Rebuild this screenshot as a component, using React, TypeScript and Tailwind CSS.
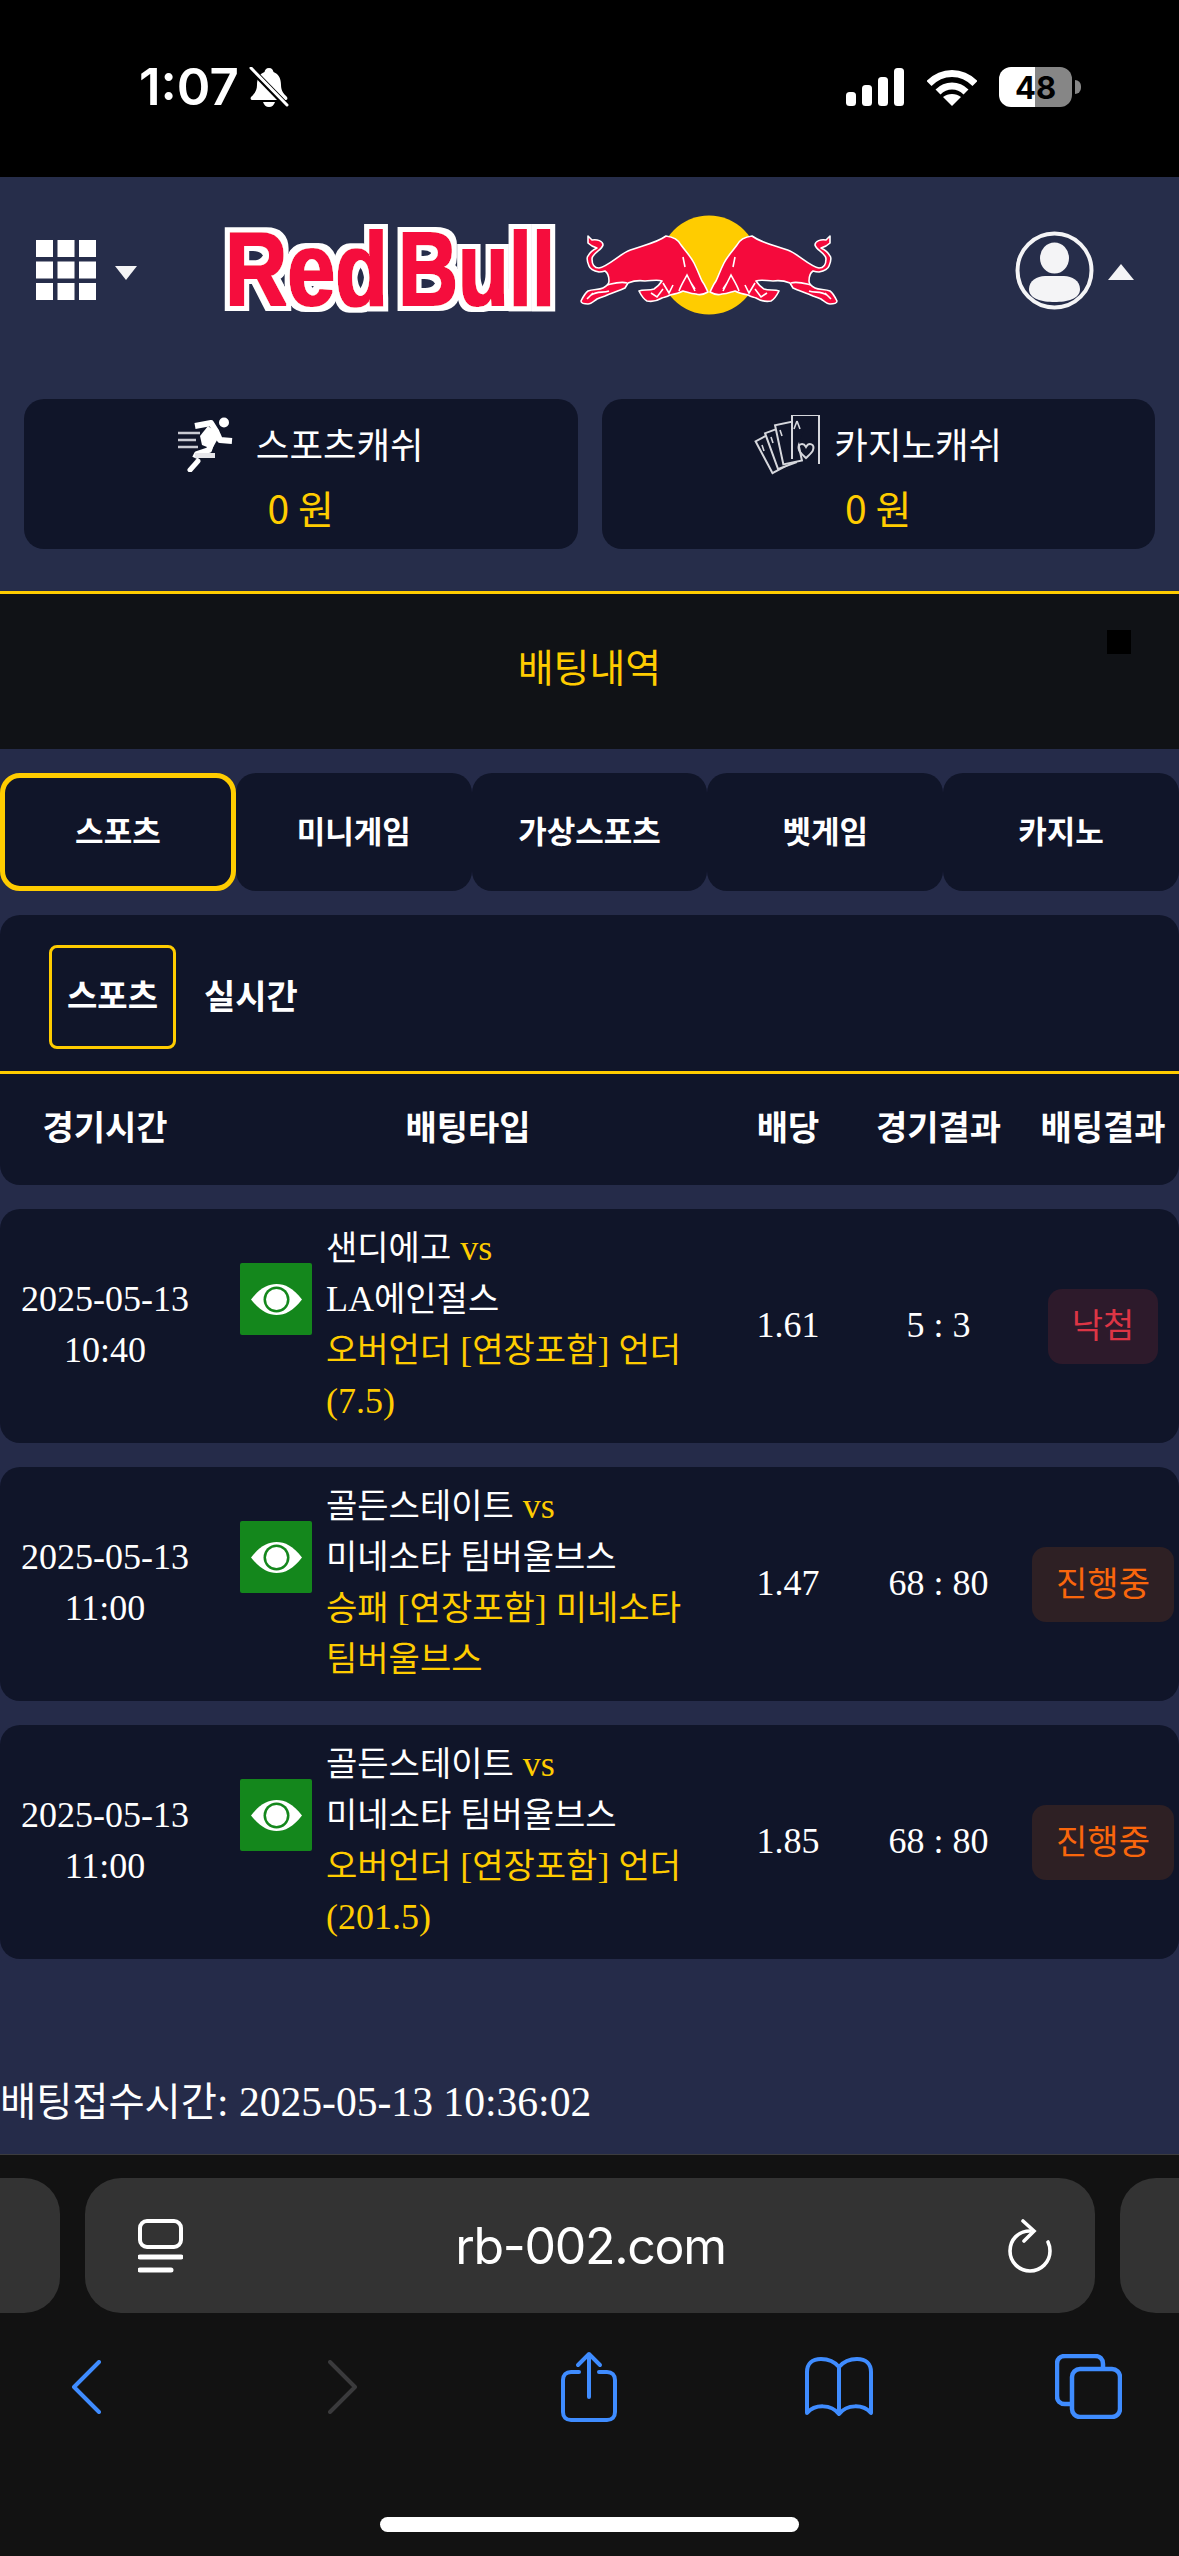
const sans = "font-['Noto_Sans_CJK_KR','Noto_Sans',sans-serif]";

const bets = [
  {
    date: "2025-05-13",
    time: "10:40",
    home: "샌디에고",
    away: "LA에인절스",
    pick: "오버언더 [연장포함] 언더 (7.5)",
    odds: "1.61",
    score: "5 : 3",
    result: "낙첨",
  },
  {
    date: "2025-05-13",
    time: "11:00",
    home: "골든스테이트",
    away: "미네소타 팀버울브스",
    pick: "승패 [연장포함] 미네소타 팀버울브스",
    odds: "1.47",
    score: "68 : 80",
    result: "진행중",
  },
  {
    date: "2025-05-13",
    time: "11:00",
    home: "골든스테이트",
    away: "미네소타 팀버울브스",
    pick: "오버언더 [연장포함] 언더 (201.5)",
    odds: "1.85",
    score: "68 : 80",
    result: "진행중",
  },
];

// hangul runs sit a bit smaller than the serif latin next to them
function Mixed({ text }: { text: string }) {
  const parts = text.split(/([\uac00-\ud7a3]+)/);
  return (
    <>
      {parts.map((part, i) =>
        i % 2 === 1 ? (
          <span key={i} className="text-[0.945em]">
            {part}
          </span>
        ) : (
          part
        )
      )}
    </>
  );
}

function Bull() {
  return (
    <g>
      <path
        d="M9 21 L13 25 C18 24 24 26 24 30 C23 35 13 38 13 44 C13 50 16 53 20 53 C28 52 40 40 49 36 C60 31 76 29 87 21 C95 22 100 26 102 30 C108 38 112 42 115 48 C119 56 121 62 123 66 C126 70 127 73 129 77 C124 80 120 80 117 79 C112 79 108 77 104 76 C100 78 96 79 91 80 C88 82 86 82 83 83 C78 86 73 87 68 86 C64 84 62 80 60 76 C64 74 70 76 75 74 C78 72 81 69 83 66 C78 64 72 66 66 66 C60 65 54 66 49 68 L46 73 C40 76 32 78 26 81 C23 82 20 83 18 84 C15 86 12 89 9 89 C5 89 2 88 2 86 C4 82 6 78 9 76 C14 74 20 75 24 73 C28 71 30 69 30 66 C30 62 29 58 26 56 C23 57 21 57 20 57 C15 56 11 54 10 51 C8 46 8 42 9 41 C11 37 14 35 18 33 C14 32 11 30 9 28 Z"
        fill="#f50a3c"
        stroke="#ffffff"
        strokeWidth="1.6"
        strokeLinejoin="round"
      />
      <path
        d="M100 76 C102 70 106 64 108 60 C110 64 113 70 116 76 M84 68 L90 78 L94 70 M72 78 L78 82 L84 74 M28 70 C36 68 42 66 48 68 M12 80 C18 76 24 78 30 76 M8 84 L14 78 M104 42 L106 52 M112 68 L116 74"
        fill="none"
        stroke="#ffffff"
        strokeWidth="1.6"
      />
    </g>
  );
}

function RedBullLogo() {
  return (
    <svg width="615" height="100" viewBox="0 0 615 100" className="block overflow-visible">
      <defs>
        <filter id="logoOutline" x="-10%" y="-20%" width="120%" height="140%">
          <feMorphology in="SourceAlpha" operator="dilate" radius="6" result="outer" />
          <feFlood floodColor="#ffffff" />
          <feComposite in2="outer" operator="in" result="white" />
          <feMorphology in="SourceGraphic" operator="dilate" radius="1" result="fat" />
          <feMerge>
            <feMergeNode in="white" />
            <feMergeNode in="fat" />
          </feMerge>
        </filter>
      </defs>
      <g fontFamily="'Liberation Sans', sans-serif" fontWeight="700" fontSize="103" fill="#f50a3c" filter="url(#logoOutline)">
        <text x="1" y="90" textLength="163" lengthAdjust="spacingAndGlyphs">
          Red
        </text>
        <text x="174" y="90" textLength="157" lengthAdjust="spacingAndGlyphs">
          Bull
        </text>
      </g>
      <g transform="translate(355 0)">
        <circle cx="130" cy="50" r="49.5" fill="#ffcc00" />
        <Bull />
        <g transform="translate(260 0) scale(-1 1)">
          <Bull />
        </g>
      </g>
    </svg>
  );
}

function MenuGrid() {
  return (
    <svg width="60" height="60" viewBox="0 0 60 60" fill="#ffffff" className="mt-[10px] block">
      <rect x="0" y="0" width="17" height="17" />
      <rect x="21.5" y="0" width="17" height="17" />
      <rect x="43" y="0" width="17" height="17" />
      <rect x="0" y="21.5" width="17" height="17" />
      <rect x="21.5" y="21.5" width="17" height="17" />
      <rect x="43" y="21.5" width="17" height="17" />
      <rect x="0" y="43" width="17" height="17" />
      <rect x="21.5" y="43" width="17" height="17" />
      <rect x="43" y="43" width="17" height="17" />
    </svg>
  );
}

function ProfileIcon() {
  return (
    <svg width="79" height="79" viewBox="0 0 79 79" className="mt-[10px] block">
      <circle cx="39.5" cy="39.5" r="37" fill="none" stroke="#f4f4f6" strokeWidth="4" />
      <ellipse cx="39.5" cy="27" rx="14.5" ry="15.5" fill="#f4f4f6" />
      <path d="M14 58 C14 50 22 45 30 45 H49 C57 45 65 50 65 58 C65 68 52 71 39.5 71 C27 71 14 68 14 58 Z" fill="#f4f4f6" />
    </svg>
  );
}

function RunnerIcon() {
  return (
    <svg width="55" height="55" viewBox="0 0 55 55" className="block shrink-0">
      <circle cx="46" cy="5.5" r="5" fill="#ffffff" />
      <path
        d="M17 9 L33 6 L38 14 L33 27 L31 33 L19 37 L17 41 M38 14 L42 23 L54 24"
        fill="none"
        stroke="#ffffff"
        strokeWidth="6"
        strokeLinejoin="round"
      />
      <path d="M22 19 L30 9 L42 18 L34 32 L24 28 Z" fill="#ffffff" />
      <path d="M20 44 L12 53" stroke="#ffffff" strokeWidth="5" strokeLinecap="round" />
      <rect x="17" y="36" width="20" height="5" fill="#e6e6ea" />
      <path d="M0 16 H22 M0 23 H18 M0 30 H20" stroke="#c9cad2" strokeWidth="2.5" />
    </svg>
  );
}

function CardsIcon() {
  return (
    <svg width="66" height="60" viewBox="0 0 66 60" className="block shrink-0">
      <g fill="#101529" stroke="#d6d7dc" strokeWidth="2">
        <rect x="9" y="20" width="19" height="36" transform="rotate(-28 18 38)" />
        <rect x="17" y="14" width="19" height="38" transform="rotate(-20 26 33)" />
        <rect x="25" y="8" width="19" height="40" transform="rotate(-12 34 28)" />
        <path d="M56 0 H65 V49 M56 0 H38 L38 44" />
      </g>
      <path
        d="M52 32 C49 27 43 29 45 35 C46 38 50 41 52 43 C54 41 58 38 59 35 C61 29 55 27 52 32 Z"
        fill="none"
        stroke="#d6d7dc"
        strokeWidth="2"
      />
      <path d="M43 6 L40 14 M43 6 L46 14 M8 30 L10 36 M17 22 L19 28 M26 15 L28 21" stroke="#d6d7dc" strokeWidth="1.6" />
    </svg>
  );
}

function EyeIcon() {
  return (
    <svg width="51" height="31" viewBox="0 0 51 31" className="block">
      <path d="M0 15.5 C9 4 17 0 25.5 0 C34 0 42 4 51 15.5 C42 27 34 31 25.5 31 C17 31 9 27 0 15.5 Z" fill="#ffffff" />
      <circle cx="25.5" cy="15.5" r="13" fill="#14871c" />
      <circle cx="25.5" cy="15.5" r="10.5" fill="#ffffff" />
    </svg>
  );
}

function MutedBell() {
  return (
    <svg width="40" height="40" viewBox="0 0 40 40" className="block">
      <path d="M20 1 C23 1 24 3 24.5 5 C30 7 32 12 32 18 C32 24 35 27 38 30 C39 32 38 33 36 33 H4 C2 33 1 32 2 30 C5 27 8 24 8 18 C8 12 10 7 15.5 5 C16 3 17 1 20 1 Z" fill="#ffffff" />
      <path d="M14 35 H26 C25 38 23 40 20 40 C17 40 15 38 14 35 Z" fill="#ffffff" />
      <path d="M3 3 L38 39" stroke="#000000" strokeWidth="6" />
      <path d="M2 1 L38 38" stroke="#ffffff" strokeWidth="3" strokeLinecap="round" />
    </svg>
  );
}

function StatusIcons() {
  return (
    <div className="flex items-center">
      <svg width="58" height="38" viewBox="0 0 58 38" fill="#ffffff" className="block">
        <rect x="0" y="24" width="10" height="14" rx="3.5" />
        <rect x="16" y="17" width="10" height="21" rx="3.5" />
        <rect x="32" y="9" width="10" height="29" rx="3.5" />
        <rect x="48" y="0" width="10" height="38" rx="3.5" />
      </svg>
      <svg width="50" height="37" viewBox="0 0 50 37" className="ml-[23px] block">
        <path d="M2 14.5 C15 1 35 1 48 14.5" fill="none" stroke="#ffffff" strokeWidth="7" />
        <path d="M11 23 C19 15 31 15 39 23" fill="none" stroke="#ffffff" strokeWidth="7" />
        <path d="M25 37 L16 28 C21 24 29 24 34 28 Z" fill="#ffffff" />
      </svg>
      <div className="ml-[22px] flex h-[40px] w-[73px] items-center justify-center rounded-[12px] bg-[linear-gradient(90deg,#ffffff_49%,#868686_49%)] font-['Inter',sans-serif] text-[31px] font-bold leading-none text-black">
        48
      </div>
      <div className="ml-[3px] h-[14px] w-[6px] rounded-r-full bg-[#868686]" />
    </div>
  );
}

function BrowserBar() {
  return (
    <div className="flex h-[402px] shrink-0 flex-col border-t border-[#3c3c3e] bg-[#121212]">
      <div className="mt-[23px] flex h-[135px] items-stretch justify-between">
        <div className="w-[60px] rounded-r-[36px] bg-[#333333]" />
        <div className="flex w-[1010px] items-center rounded-[36px] bg-[#333333] pl-[53px] pr-[43px]">
          <svg width="45" height="54" viewBox="0 0 45 54" fill="none" stroke="#ffffff" strokeWidth="4" className="block shrink-0">
            <rect x="2" y="2" width="41" height="26" rx="7" />
            <path d="M2 38 H43 M2 51 H33" strokeLinecap="round" strokeWidth="5" />
          </svg>
          <span className="flex-1 pr-[10px] text-center font-['Inter',sans-serif] text-[50px] leading-none tracking-[-0.026em] text-white">rb-002.com</span>
          <svg width="44" height="54" viewBox="0 0 44 54" fill="none" stroke="#ffffff" strokeWidth="3.6" strokeLinecap="round" className="block shrink-0">
            <path d="M22 12 C10 12 2 21 2 32 C2 43 11 52 22 52 C33 52 42 43 42 32 C42 28 41 25 40 23" />
            <path d="M15 2 L26 12 L16 22" />
          </svg>
        </div>
        <div className="w-[59px] rounded-l-[36px] bg-[#333333]" />
      </div>
      <div className="mt-[38px] flex h-[71px] items-center pl-[71px]">
        <svg width="30" height="54" viewBox="0 0 30 54" fill="none" stroke="#3f8cff" strokeWidth="4" strokeLinecap="round" strokeLinejoin="round" className="block">
          <path d="M28 2 L3 27 L28 52" />
        </svg>
        <svg width="30" height="54" viewBox="0 0 30 54" fill="none" stroke="#3a3a3c" strokeWidth="4" strokeLinecap="round" strokeLinejoin="round" className="ml-[227px] block">
          <path d="M2 2 L27 27 L2 52" />
        </svg>
        <svg width="56" height="71" viewBox="0 0 56 71" fill="none" stroke="#3f8cff" strokeWidth="4" strokeLinecap="round" strokeLinejoin="round" className="ml-[203px] block">
          <path d="M18 21 H10 C5 21 2 24 2 29 V61 C2 66 5 69 10 69 H46 C51 69 54 66 54 61 V29 C54 24 51 21 46 21 H38" />
          <path d="M28 3 V46 M17 14 L28 3 L39 14" />
        </svg>
        <svg width="70" height="59" viewBox="0 0 70 59" fill="none" stroke="#3f8cff" strokeWidth="4" strokeLinejoin="round" className="ml-[187px] block">
          <path d="M35 10 C30 4 24 2 17 2 C8 2 3 7 3 15 V56 C11 47 27 47 35 57 C43 47 59 47 67 56 V15 C67 7 62 2 53 2 C46 2 40 4 35 10 Z M35 10 V57" />
        </svg>
        <svg width="67" height="65" viewBox="0 0 67 65" fill="none" stroke="#3f8cff" strokeWidth="4.5" strokeLinejoin="round" className="ml-[181px] block">
          <path d="M15 50 H10 C5 50 2 47 2 42 V10 C2 5 5 2 10 2 H40 C45 2 48 5 48 10 V14" />
          <rect x="17" y="15" width="48" height="48" rx="8" />
        </svg>
      </div>
      <div className="mx-auto mt-[95px] h-[15px] w-[419px] rounded-full bg-white" />
    </div>
  );
}

function Badge({ result }: { result: string }) {
  const lost = result === "낙첨";
  return (
    <span
      className={
        lost
          ? "flex h-[75px] w-[110px] items-center justify-center rounded-[14px] bg-[#2d1a2b] text-[#dc3545]"
          : "flex h-[75px] w-[142px] items-center justify-center rounded-[14px] bg-[#2e2024] text-[#f9660c]"
      }
    >
      <Mixed text={result} />
    </span>
  );
}

function BetRow({ bet }: { bet: (typeof bets)[number] }) {
  return (
    <div className="mt-[24px] grid h-[234px] grid-cols-[210px_516px_124px_177px_152px] items-center rounded-[20px] bg-[#101529] text-[36px] leading-[51px] text-white">
      <div className="pb-[2px] text-center">
        <div>{bet.date}</div>
        <div>{bet.time}</div>
      </div>
      <div className="flex items-start pb-[2px] pl-[30px]">
        <div className="mt-[40px] flex h-[72px] w-[72px] shrink-0 items-center justify-center rounded-[2px] bg-[#14871c]">
          <EyeIcon />
        </div>
        <div className="ml-[14px] w-[365px]">
          <div>
            <Mixed text={bet.home} /> <span className="text-[#ffcc00]">vs</span>
          </div>
          <div>
            <Mixed text={bet.away} />
          </div>
          <div className="text-[#ffcc00]">
            <Mixed text={bet.pick} />
          </div>
        </div>
      </div>
      <div className="pb-[2px] text-center">{bet.odds}</div>
      <div className="pb-[2px] text-center">{bet.score}</div>
      <div className="flex justify-center">
        <Badge result={bet.result} />
      </div>
    </div>
  );
}

export default function App() {
  const tabs = ["스포츠", "미니게임", "가상스포츠", "벳게임", "카지노"];

  return (
    <div className={`flex h-[2556px] w-[1179px] flex-col overflow-hidden bg-[#252b49] ${sans}`}>
      {/* status bar */}
      <div className="flex h-[177px] shrink-0 items-start justify-between bg-black pl-[139px] pr-[98px] pt-[67px]">
        <div className="flex items-center">
          <span className="font-['Inter',sans-serif] text-[51px] font-semibold leading-[40px] text-white">1:07</span>
          <span className="ml-[10px]">
            <MutedBell />
          </span>
        </div>
        <StatusIcons />
      </div>

      <div className="flex min-h-0 flex-1 flex-col overflow-hidden">
        {/* header */}
        <div className="h-[414px] shrink-0 bg-[#262d4a] pt-[38px]">
          <div className="flex h-[100px] items-center pl-[36px] pr-[45px]">
            <MenuGrid />
            <div className="ml-[19px] mt-[16px] h-0 w-0 border-x-[11.5px] border-t-[14px] border-x-transparent border-t-[#f4f4f6]" />
            <div className="ml-[87px]">
              <RedBullLogo />
            </div>
            <div className="ml-auto">
              <ProfileIcon />
            </div>
            <div className="ml-[14px] mt-[14px] h-0 w-0 border-x-[13px] border-b-[16px] border-x-transparent border-b-[#f4f4f6]" />
          </div>
          <div className="mt-[84px] grid grid-cols-2 gap-[24px] px-[24px]">
            <div className="flex h-[150px] flex-col items-center rounded-[20px] bg-[#101529] pt-[18px]">
              <div className="flex h-[55px] items-center gap-[23px] text-[36.5px] text-white">
                <RunnerIcon />
                <span className="leading-none">스포츠캐쉬</span>
              </div>
              <div className="mt-[16px] text-[39px] leading-none text-[#ffcc00]">0 원</div>
            </div>
            <div className="flex h-[150px] flex-col items-center rounded-[20px] bg-[#101529] pt-[18px]">
              <div className="flex h-[55px] items-center gap-[14px] text-[36.5px] text-white">
                <CardsIcon />
                <span className="leading-none">카지노캐쉬</span>
              </div>
              <div className="mt-[16px] text-[39px] leading-none text-[#ffcc00]">0 원</div>
            </div>
          </div>
        </div>

        {/* page title */}
        <div className="relative flex h-[158px] shrink-0 items-center justify-center border-t-[3px] border-[#ffcc00] bg-[#101216] pb-[12px] text-[39px] text-[#ffcc00]">
          배팅내역
          <div className="absolute right-[48px] top-[36px] h-[24px] w-[24px] bg-black" />
        </div>

        {/* game tabs */}
        <div className="mt-[24px] grid h-[118px] shrink-0 grid-cols-5 text-[31px] font-bold text-white">
          {tabs.map((tab, i) => (
            <div
              key={tab}
              className={
                i === 0
                  ? "flex items-center justify-center rounded-[20px] border-[5px] border-[#ffcc00] bg-[#101529] pb-[4px]"
                  : "flex items-center justify-center rounded-[20px] bg-[#101529] pb-[4px]"
              }
            >
              {tab}
            </div>
          ))}
        </div>

        {/* filter + table head */}
        <div className="mt-[24px] shrink-0 rounded-[20px] bg-[#101529] text-[34px] font-bold text-white">
          <div className="flex h-[159px] items-start border-b-[3px] border-[#ffcc00] pl-[49px] pt-[30px]">
            <div className="flex h-[104px] w-[127px] items-center justify-center rounded-[8px] border-[3px] border-[#ffcc00] pb-[4px] text-[33px]">스포츠</div>
            <div className="ml-[28px] flex h-[104px] items-center pb-[6px]">실시간</div>
          </div>
          <div className="grid h-[111px] grid-cols-[210px_516px_124px_177px_152px] items-center pb-[8px] text-center">
            <div>경기시간</div>
            <div>배팅타입</div>
            <div>배당</div>
            <div>경기결과</div>
            <div>배팅결과</div>
          </div>
        </div>

        <div className="shrink-0 font-['Liberation_Serif','Noto_Sans_CJK_KR',serif]">
          {bets.map((bet, i) => (
            <BetRow key={i} bet={bet} />
          ))}
          <div className="mt-[112px] text-[41.6px] leading-[63px] text-white">
            <Mixed text="배팅접수시간: 2025-05-13 10:36:02" />
          </div>
          <div className="mt-[13px] text-[41.6px] leading-[63px] text-white">
            <Mixed text="배팅금액: 당첨예상금액 배팅결과" /> <span className="text-[#ffcc00]">0</span>
          </div>
        </div>
      </div>

      <BrowserBar />
    </div>
  );
}
